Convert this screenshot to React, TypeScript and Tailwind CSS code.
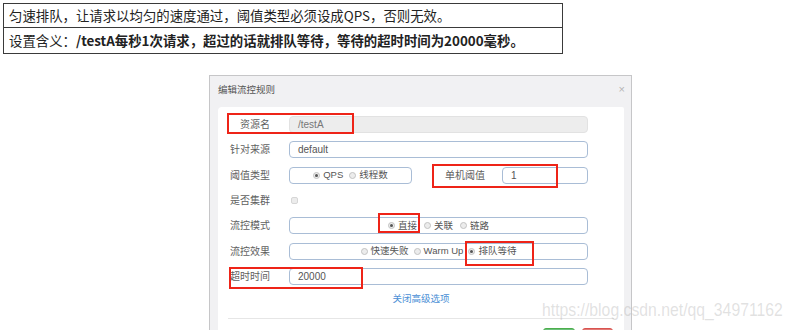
import React from "react";

function Radio({ checked, label }: { checked?: boolean; label: string }) {
  return (
    <span className="flex items-center gap-[3px]">
      <span className="w-[7px] h-[7px] rounded-full border border-[#c2c2c2] bg-[#ececec] flex items-center justify-center">
        {checked && <span className="w-[3px] h-[3px] rounded-full bg-[#555]" />}
      </span>
      <span>{label}</span>
    </span>
  );
}

function Label({ children }: { children: React.ReactNode }) {
  return <div className="w-[52px] shrink-0 text-right text-[10px] leading-[17px] text-[#5f5f5f]">{children}</div>;
}

const inputCls =
  "h-[17px] rounded-[4px] border border-[#a9bdd6] bg-white pl-[8px] text-[10px] leading-[15px] text-[#555] flex items-center";

export default function App() {
  return (
    <div className="relative w-[793px] h-[330px] overflow-hidden bg-white font-['Noto_Sans_CJK_SC','Liberation_Sans',sans-serif]">
      {/* top table */}
      <div className="ml-[3px] mt-[3px] w-[560px] border border-[#3a3a3a] text-[13.4px] text-[#222]">
        <div className="h-[24px] pl-[5px] flex items-center border-b border-[#3a3a3a]">
          匀速排队，让请求以均匀的速度通过，阈值类型必须设成QPS，否则无效。
        </div>
        <div className="h-[25px] pl-[5px] flex items-center">
          设置含义：<span className="font-semibold">/testA每秒1次请求，超过的话就排队等待，等待的超时时间为20000毫秒。</span>
        </div>
      </div>

      {/* dialog */}
      <div className="ml-[209px] mt-[21px] w-[423px] h-[270px] bg-[#f1f1f3] border-t border-x border-[#c6c6c8] font-['Liberation_Sans','Noto_Sans_CJK_SC',sans-serif]">
        <div className="h-[31px] pl-[8px] pr-[6px] flex items-start justify-between pt-[8px]">
          <span className="text-[9.5px] leading-[12px] text-[#555]">编辑流控规则</span>
          <span className="text-[11px] leading-[11px] text-[#b5b5b5]">×</span>
        </div>
        <div className="ml-[8px] w-[406px] h-[240px] bg-white rounded-tl-[4px] rounded-tr-[2px] pt-[9px]">
          <div className="flex flex-col gap-[8.33px]">
            <div className="flex items-center h-[17px]">
              <Label>资源名</Label>
              <div className="ml-[19px] w-[299px] h-[17px] rounded-[4px] border border-[#e2e2e2] bg-[#ededed] pl-[8px] text-[10px] leading-[15px] text-[#777] flex items-center">
                /testA
              </div>
            </div>
            <div className="flex items-center h-[17px]">
              <Label>针对来源</Label>
              <div className={"ml-[19px] w-[299px] " + inputCls}>default</div>
            </div>
            <div className="flex items-center h-[17px]">
              <Label>阈值类型</Label>
              <div className="ml-[19px] w-[123px] h-[17px] rounded-[4px] border border-[#a9bdd6] flex items-center justify-center gap-[6px] text-[9.5px] text-[#555]">
                <Radio checked label="QPS" />
                <Radio label="线程数" />
              </div>
              <div className="ml-[33px] w-[40px] text-[10px] leading-[17px] text-[#5f5f5f]">单机阈值</div>
              <div className={"ml-[17px] w-[86px] " + inputCls}>1</div>
            </div>
            <div className="flex items-center h-[17px]">
              <Label>是否集群</Label>
              <div className="ml-[21px] w-[7px] h-[7px] rounded-[2px] border border-[#d6d6d6] bg-[#ececec]" />
            </div>
            <div className="flex items-center h-[17px]">
              <Label>流控模式</Label>
              <div className="ml-[19px] w-[299px] h-[17px] rounded-[4px] border border-[#a9bdd6] flex items-center justify-center gap-[7px] text-[9.5px] text-[#555]">
                <Radio checked label="直接" />
                <Radio label="关联" />
                <Radio label="链路" />
              </div>
            </div>
            <div className="flex items-center h-[17px]">
              <Label>流控效果</Label>
              <div className="ml-[19px] w-[299px] h-[17px] rounded-[4px] border border-[#a9bdd6] flex items-center justify-center gap-[5px] text-[9.5px] text-[#555]">
                <Radio label="快速失败" />
                <Radio label="Warm Up" />
                <Radio checked label="排队等待" />
              </div>
            </div>
            <div className="flex items-center h-[17px]">
              <Label>超时时间</Label>
              <div className={"ml-[19px] w-[299px] " + inputCls}>20000</div>
            </div>
          </div>
          <div className="mt-[8px] h-[12px] text-center text-[9.5px] leading-[12px] text-[#4b8fd6]">关闭高级选项</div>
          <div className="mt-[13px] mx-[10px] border-t border-[#e6e6e6]" />
          <div className="mt-[9px] mr-[11px] flex justify-end gap-[7px]">
            <div className="w-[32px] h-[16px] rounded-[3px] bg-[#6cc07b] border border-[#4cae4c]" />
            <div className="w-[31px] h-[16px] rounded-[3px] bg-[#e27a76] border border-[#d9534f]" />
          </div>
        </div>
      </div>

      {/* red annotation boxes */}
      <div className="absolute left-[227px] top-[113px] w-[127px] h-[21px] border-2 border-[#ee2418]" />
      <div className="absolute left-[432px] top-[164px] w-[126px] h-[24px] border-2 border-[#ee2418]" />
      <div className="absolute left-[378px] top-[213px] w-[42px] h-[20px] border-2 border-[#ee2418]" />
      <div className="absolute left-[465px] top-[241px] w-[69px] h-[25px] border-2 border-[#ee2418]" />
      <div className="absolute left-[229px] top-[267px] w-[134px] h-[22px] border-2 border-[#ee2418]" />

      {/* watermark */}
      <div className="absolute left-[542px] top-[300px] origin-left scale-x-[0.83] whitespace-nowrap font-['Liberation_Sans',sans-serif] text-[19px] leading-[19px] text-[rgba(170,170,170,0.35)]">
        https://blog.csdn.net/qq_34971162
      </div>
    </div>
  );
}
